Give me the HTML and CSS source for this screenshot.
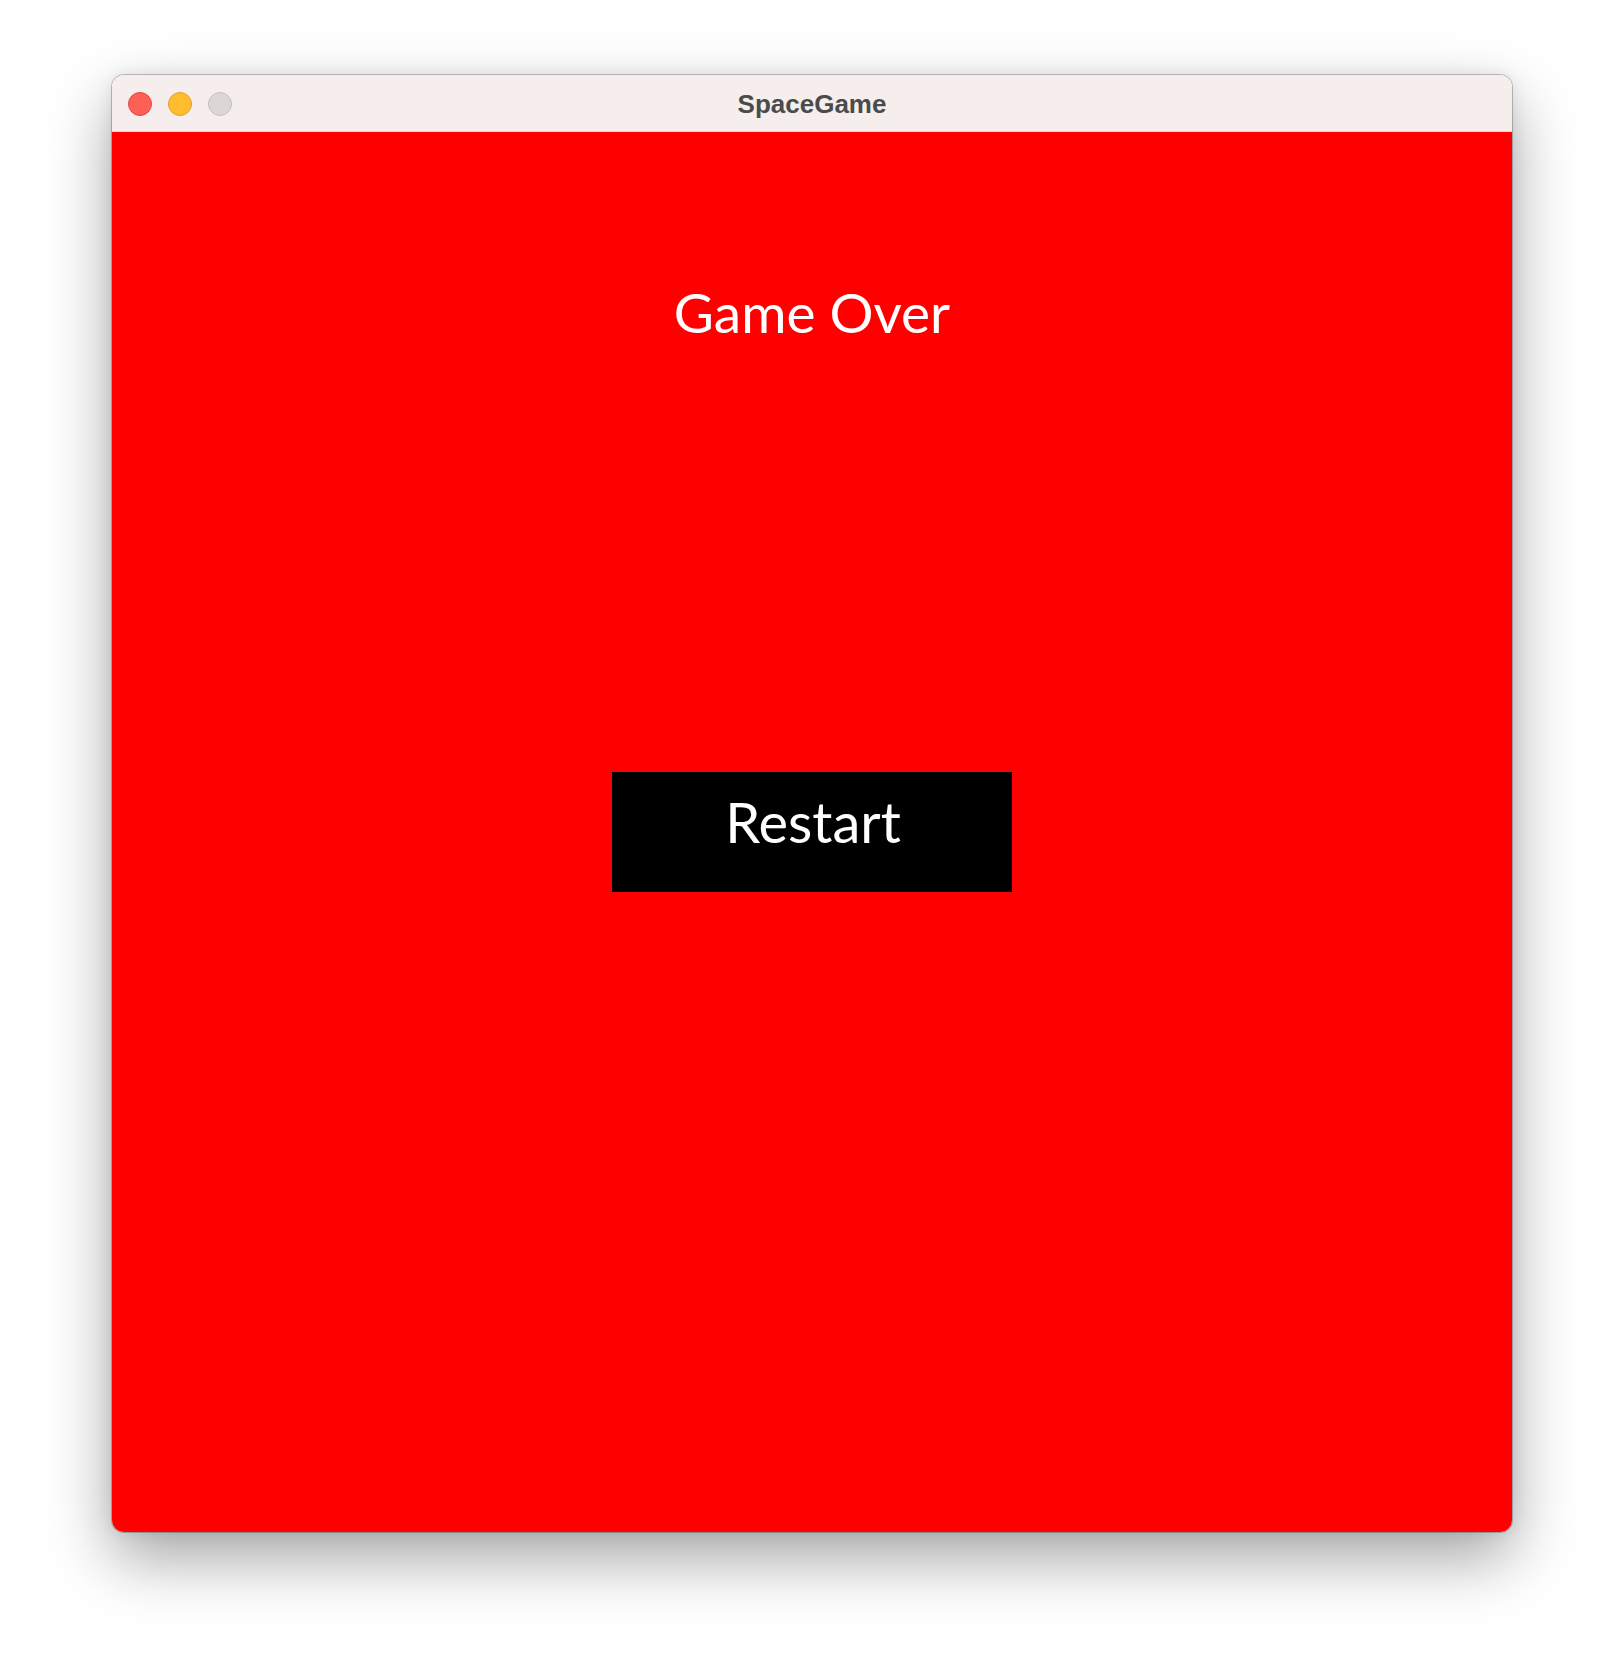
FILE: index.html
```html
<!DOCTYPE html>
<html>
<head>
<meta charset="utf-8">
<link rel="stylesheet" href="styles.css">
</head>
<body>
<div class="desk">
  <div class="window">
    <div class="titlebar">
      <div class="lights">
        <span class="light red"></span>
        <span class="light yellow"></span>
        <span class="light gray"></span>
      </div>
      <div class="title">SpaceGame</div>
    </div>
    <div class="content">
      <div class="heading">Game Over</div>
      <div class="button">Restart</div>
    </div>
  </div>
</div>
</body>
</html>
```
FILE: styles.css
```css
html, body {
  margin: 0;
  padding: 0;
  background: #ffffff;
}
.desk {
  width: 1624px;
  height: 1680px;
  padding: 75px 0 0 112px;
  box-sizing: border-box;
}
.window {
  width: 1400px;
  border-radius: 12px;
  overflow: hidden;
  display: flex;
  flex-direction: column;
  box-shadow: 0 0 0 1px rgba(0,0,0,0.22), 0 26px 64px rgba(0,0,0,0.36), 0 0 16px rgba(0,0,0,0.09);
}
.titlebar {
  height: 57px;
  background: #f5eeed;
  position: relative;
  display: flex;
  align-items: center;
  justify-content: center;
  box-shadow: inset 0 -1px 0 rgba(0,0,0,0.08);
}
.lights {
  position: absolute;
  left: 16px;
  top: 17px;
  display: flex;
  gap: 16px;
}
.light {
  width: 24px;
  height: 24px;
  border-radius: 50%;
  box-sizing: border-box;
}
.red { background: #fe5f57; border: 1px solid #e2463f; }
.yellow { background: #febc2e; border: 1px solid #e0a32a; }
.gray { background: #dcd6d5; border: 1px solid #c6c0bf; }
.title {
  font-family: "Liberation Sans", Arial, sans-serif;
  font-weight: bold;
  font-size: 26px;
  color: #4b4b4b;
  margin-top: 1px;
}
.content {
  height: 1400px;
  background: #ff0000;
  display: flex;
  flex-direction: column;
  align-items: center;
}
.heading {
  font-family: Lato, "Noto Sans", sans-serif;
  font-size: 55px;
  line-height: 56px;
  color: #ffffff;
  margin-top: 152px;
}
.button {
  margin-top: 432px;
  width: 400px;
  height: 120px;
  background: #000000;
  color: #ffffff;
  font-family: Lato, "Noto Sans", sans-serif;
  font-size: 56px;
  line-height: 56px;
  display: flex;
  justify-content: center;
  padding-top: 22px;
  padding-left: 2px;
  box-sizing: border-box;
}
```
